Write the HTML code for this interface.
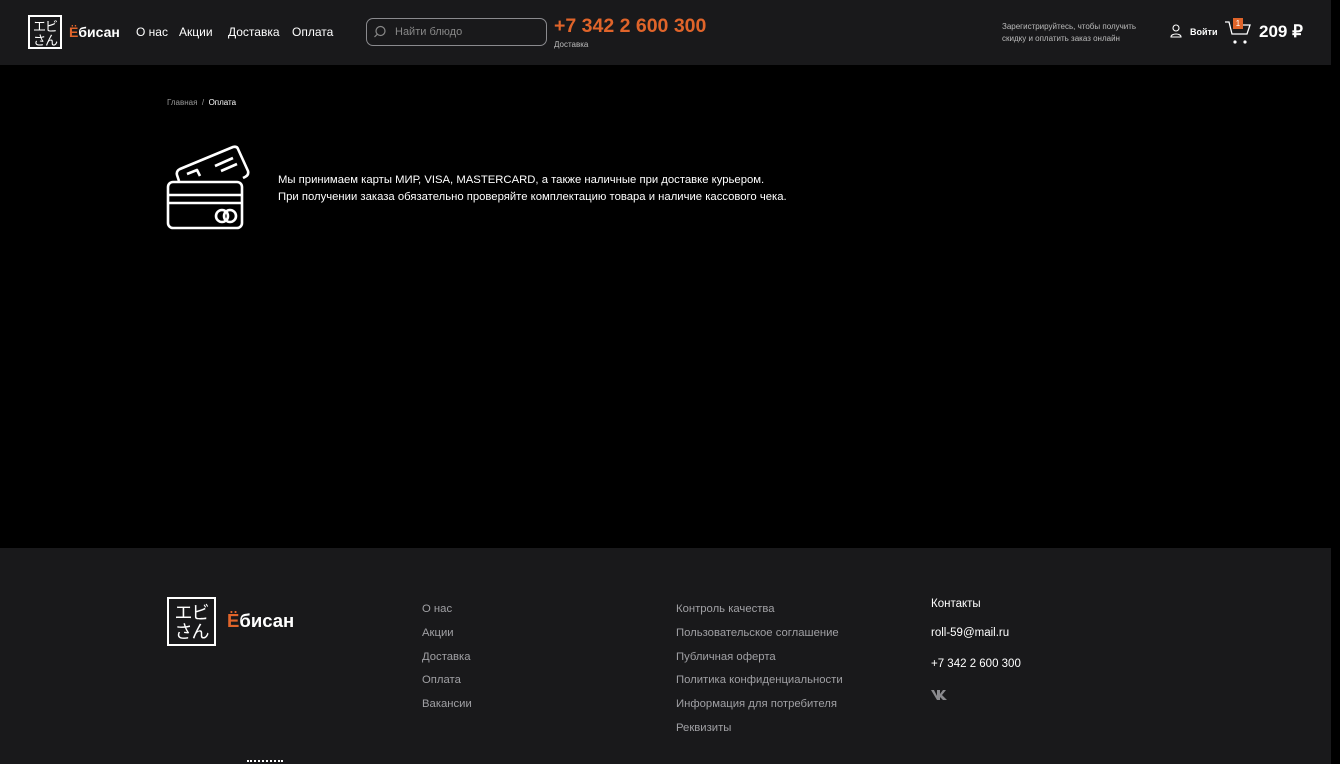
<!DOCTYPE html>
<html><head><meta charset="utf-8"><style>
*{margin:0;padding:0;box-sizing:border-box}
body{width:1340px;height:764px;background:#000;font-family:"Liberation Sans","Noto Sans CJK JP",sans-serif;color:#fff;position:relative;overflow:hidden}
.abs{position:absolute}
header{position:absolute;left:0;top:0;width:1331px;height:65px;background:#19191b}
footer{position:absolute;left:0;top:548px;width:1331px;height:216px;background:#19191b}
.logo{border:2px solid #fff;display:flex;flex-wrap:wrap;align-items:center;justify-content:center;font-family:"Noto Sans CJK JP",sans-serif;line-height:1;letter-spacing:-1px}
.nav{font-size:12px;color:#fff}
.fl{font-size:11px;color:#a0a0a4}
</style></head><body>
<header>
 <div class="abs logo" style="left:28px;top:15px;width:34px;height:34px;font-size:13px;padding:1px"><span>エビ</span><span>さん</span></div>
 <div class="abs" style="left:69px;top:24px;font-size:14px;font-weight:bold"><span style="color:#e0642a">Ё</span>бисан</div>
 <div class="abs nav" style="left:136px;top:25px">О нас</div>
 <div class="abs nav" style="left:179px;top:25px">Акции</div>
 <div class="abs nav" style="left:228px;top:25px">Доставка</div>
 <div class="abs nav" style="left:292px;top:25px">Оплата</div>
 <div class="abs" style="left:366px;top:18px;width:181px;height:28px;border:1px solid #8a8a8e;border-radius:7px"></div>
 <svg class="abs" style="left:373px;top:25px" width="14" height="14" viewBox="0 0 14 14"><circle cx="7.5" cy="6" r="4.5" fill="none" stroke="#888" stroke-width="1.2"/><path d="M4.3 9.2 1.5 12" stroke="#888" stroke-width="1.2"/></svg>
 <div class="abs" style="left:395px;top:26px;font-size:11px;color:#888">Найти блюдо</div>
 <div class="abs" style="left:554px;top:15px;font-size:19.5px;color:#e0642a;font-weight:bold">+7 342 2 600 300</div>
 <div class="abs" style="left:554px;top:40px;font-size:8px;color:#bbb">Доставка</div>
 <div class="abs" style="left:1002px;top:21px;font-size:8px;color:#bbb;line-height:12px">Зарегистрируйтесь, чтобы получить<br>скидку и оплатить заказ онлайн</div>
 <svg class="abs" style="left:1169px;top:24px" width="14" height="14" viewBox="0 0 14 14"><circle cx="7" cy="4" r="3" fill="none" stroke="#fff" stroke-width="1.1"/><path d="M2 13c0-4 10-4 10 0z" fill="none" stroke="#fff" stroke-width="1.1"/></svg>
 <div class="abs" style="left:1190px;top:27px;font-size:9px;font-weight:bold">Войти</div>
 <svg class="abs" style="left:1224px;top:20px" width="28" height="26" viewBox="0 0 28 26"><path d="M1 2h4l3 12h15l3-9H9" fill="none" stroke="#fff" stroke-width="1.3"/><circle cx="11" cy="22" r="1.6" fill="#fff"/><circle cx="21" cy="22" r="1.6" fill="#fff"/></svg>
 <div class="abs" style="left:1233px;top:18px;width:10px;height:11px;background:#e0642a;font-size:8px;text-align:center;line-height:11px">1</div>
 <div class="abs" style="left:1259px;top:22px;font-size:17px;font-weight:bold">209 ₽</div>
</header>
<div class="abs" style="left:167px;top:98px;font-size:8px;color:#999">Главная &nbsp;/ &nbsp;<span style="color:#fff">Оплата</span></div>
<svg class="abs" style="left:165px;top:145px" width="88" height="88" viewBox="0 0 88 88"><g fill="none" stroke="#fff" stroke-width="2.6" stroke-linejoin="round"><path d="M14 36 L12 30 Q11 26 15 24 L68 2 Q72 1 73 4 L83 26 Q84 30 80 32 L78 33"/><rect x="3" y="37" width="74" height="46" rx="5"/><path d="M3 50h74M3 58h74"/><circle cx="57" cy="71" r="6"/><circle cx="65" cy="71" r="6"/><path d="M22 29l10-4 3 6M50 21l18-8M56 26l16-7"/></g></svg>
<div class="abs" style="left:278px;top:172px;font-size:11.3px;line-height:17px">Мы принимаем карты МИР, VISA, MASTERCARD, а также наличные при доставке курьером.<br>При получении заказа обязательно проверяйте комплектацию товара и наличие кассового чека.</div>
<footer>
 <div class="abs logo" style="left:167px;top:49px;width:49px;height:49px;font-size:18px;padding:3px"><span>エビ</span><span>さん</span></div>
 <div class="abs" style="left:227px;top:62px;font-size:18.5px;font-weight:bold"><span style="color:#e0642a">Ё</span>бисан</div>
 <div class="abs fl" style="left:422px;top:50px;line-height:23.8px;font-size:11.3px">О нас<br>Акции<br>Доставка<br>Оплата<br>Вакансии</div>
 <div class="abs fl" style="left:676px;top:50px;line-height:23.8px;font-size:11.3px">Контроль качества<br>Пользовательское соглашение<br>Публичная оферта<br>Политика конфиденциальности<br>Информация для потребителя<br>Реквизиты</div>
 <div class="abs" style="left:931px;top:50px;font-size:11.5px">Контакты</div>
 <div class="abs" style="left:931px;top:79px;font-size:11.5px">roll-59@mail.ru</div>
 <div class="abs" style="left:931px;top:110px;font-size:11.5px">+7 342 2 600 300</div>
 <svg class="abs" style="left:931px;top:142px" width="18" height="10" viewBox="0 0 18 10"><path d="M0 0h3l3 6V0h3v4l3-4h3l-4 5 5 5h-4l-3-3v3H6L0 0z" fill="#8a8a8e"/></svg>
 <div class="abs" style="left:247px;top:212px;width:36px;height:4px;border-top:2px dotted #fff"></div>
</footer>
</body></html>
